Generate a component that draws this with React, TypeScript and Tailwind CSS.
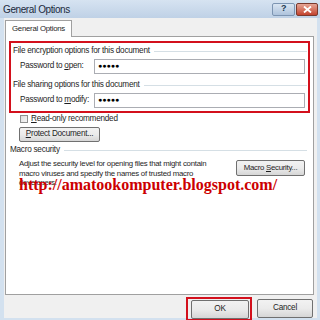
import React from "react";

function GroupLabel({ children }: { children: React.ReactNode }) {
  return (
    <div className="flex items-center gap-1 h-[12px]">
      <span className="whitespace-nowrap">{children}</span>
      <div className="flex-1 h-px bg-[#d5dfe5]" />
    </div>
  );
}

function Btn({ children, className = "" }: { children: React.ReactNode; className?: string }) {
  return (
    <div
      className={
        "flex items-center justify-center rounded-[2px] border border-[#707070] bg-gradient-to-b from-[#f2f2f2] via-[#ebebeb] to-[#d6d6d6] text-[#1e1e1e] " +
        className
      }
    >
      {children}
    </div>
  );
}

function PwField({ u, rest, pre }: { pre: string; u: string; rest: string }) {
  return (
    <div className="flex items-center h-[15px] pl-[7px] pr-[3px]">
      <span className="w-[74px] whitespace-nowrap">
        {pre}
        <span className="underline">{u}</span>
        {rest}
      </span>
      <div className="flex-1 h-[15px] border border-[#abadb3] bg-white flex items-center pl-[3px] text-[7px] tracking-[0px] text-black">
        ●●●●●
      </div>
    </div>
  );
}

export default function App() {
  return (
    <div
      className="w-[320px] h-[320px] overflow-hidden bg-[#d3e1ef] relative text-[8.2px] tracking-[-0.25px] text-[#1e1e1e]"
      style={{ fontFamily: '"Liberation Sans", Arial, sans-serif' }}
    >
      {/* title bar */}
      <div className="h-[18px] flex items-center bg-gradient-to-b from-[#d6e3f1] to-[#bfd1e6] pl-[3px] pr-[2px]">
        <span className="text-[10px] tracking-[-0.4px] text-[#1b2a3c] flex-1">General Options</span>
        <div className="w-[23px] h-[13px] mr-[1px] rounded-[2px] border border-[#7d95b2] bg-gradient-to-b from-[#d9e5f2] to-[#aec3dc] flex items-center justify-center text-[9px] text-[#22384f] font-bold">
          ?
        </div>
        <div className="w-[22px] h-[13px] rounded-[2px] border border-[#7a3a2e] bg-gradient-to-b from-[#e5a596] to-[#c2412d] flex items-center justify-center">
          <svg width="9" height="7" viewBox="0 0 9 7">
            <path d="M1 0.5 L8 6.5 M8 0.5 L1 6.5" stroke="#fff" strokeWidth="1.8" />
          </svg>
        </div>
      </div>

      {/* body */}
      <div className="absolute left-[4px] right-[3px] top-[18px] bottom-[2px] bg-[#f0f0f0]">
        {/* tab */}
        <div className="flex pl-[1px] pt-[2px]">
          <div className="w-[67px] h-[17px] bg-white border border-b-0 border-[#a0a0a0] flex items-center justify-center text-[7.8px] relative z-10">
            General Options
          </div>
        </div>
        {/* panel */}
        <div className="relative mx-[1px] -mt-px h-[259px] w-[309px] bg-white border border-[#a0a0a0] pt-[4px] px-[3px]">
          <div className="border-2 border-[#d3101c] h-[72px] pt-[2px] pl-[2px] pr-[0px] flex flex-col">
            <div className="pr-[1px]">
              <GroupLabel>File encryption options for this document</GroupLabel>
            </div>
            <div className="mt-[2px]">
              <PwField pre="Password to " u="o" rest="pen:" />
            </div>
            <div className="mt-[5px] pr-[1px]">
              <GroupLabel>File sharing options for this document</GroupLabel>
            </div>
            <div className="mt-[2px]">
              <PwField pre="Password to " u="m" rest="odify:" />
            </div>
          </div>

          <div className="flex items-center gap-[3px] pl-[11px] mt-[1px] h-[10px]">
            <div className="w-[8px] h-[8px] border border-[#8e8f8f] bg-gradient-to-br from-[#dcdcdc] to-[#f6f6f6]" />
            <span>
              <span className="underline">R</span>ead-only recommended
            </span>
          </div>
          <div className="pl-[10px] mt-[3px]">
            <Btn className="w-[81px] h-[15px]">
              <span>
                <span className="underline">P</span>rotect Document...
              </span>
            </Btn>
          </div>

          <div className="mt-[2px] pl-[1px] pr-[3px]">
            <GroupLabel>Macro security</GroupLabel>
          </div>
          <div className="flex pl-[10px] pr-[5px] mt-[3px]">
            <div className="flex-1 leading-[9.5px] text-[7.8px]">
              <div>Adjust the security level for opening files that might contain</div>
              <div>macro viruses and specify the names of trusted macro</div>
              <div>developers.</div>
            </div>
            <Btn className="w-[69px] h-[16px] mt-[1px] text-[7.8px]">
              <span>
                Macro <span className="underline">S</span>ecurity...
              </span>
            </Btn>
          </div>

          {/* watermark */}
          <div
            className="absolute left-[13px] top-[136px] text-[16px] tracking-[0px] font-bold text-[#cc0000] whitespace-nowrap"
            style={{ fontFamily: '"Liberation Serif", "Times New Roman", serif' }}
          >
            http://amatookomputer.blogspot.com/
          </div>
        </div>

        {/* footer */}
        <div className="flex justify-end gap-[5px] pr-[4px] mt-[4px]">
          <div className="border-2 border-[#d3101c] pl-[1px] pt-[1px] -mt-[2px] w-[66px] flex justify-end pr-[1px]">
            <Btn className="w-[58px] h-[19px] border-[#3c7fb1] from-[#eaf6fd] via-[#d9f0fc] to-[#a7d9f5]">OK</Btn>
          </div>
          <Btn className="w-[56px] h-[19px]">Cancel</Btn>
        </div>
      </div>
    </div>
  );
}
